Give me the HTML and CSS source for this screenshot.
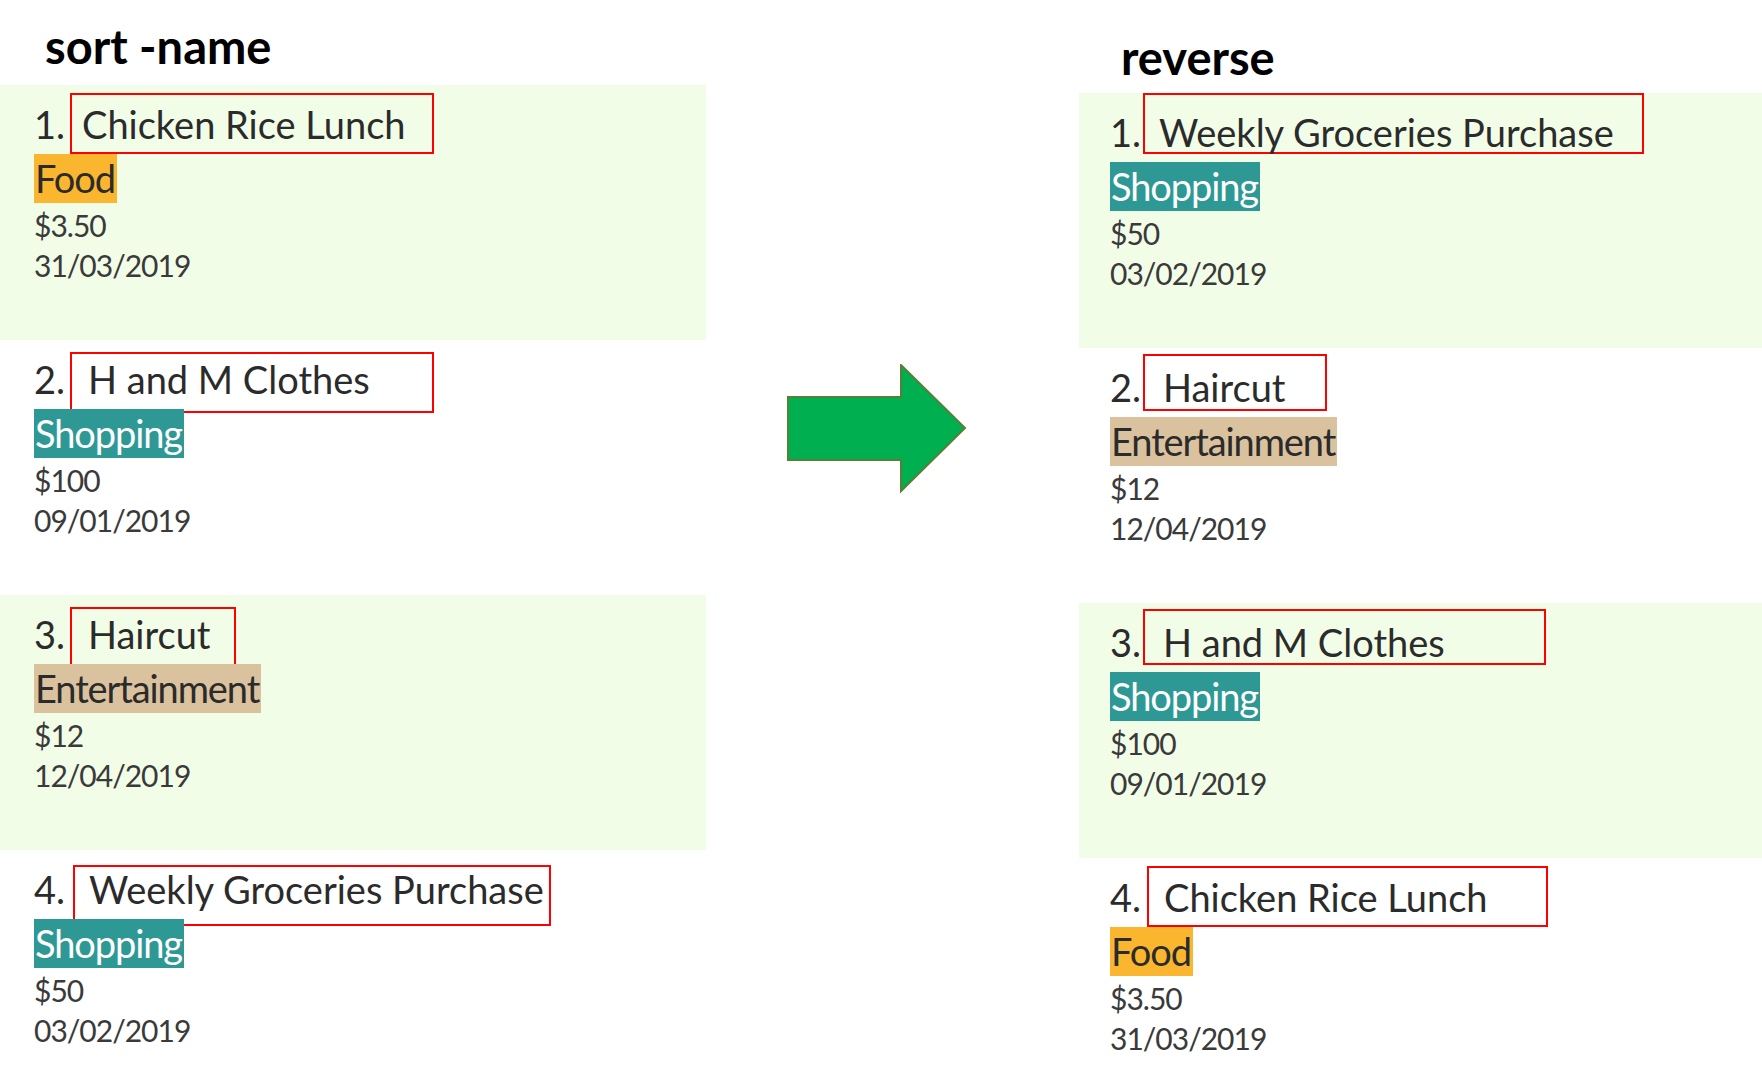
FILE: index.html
```html
<!DOCTYPE html>
<html>
<head>
<meta charset="utf-8">
<link rel="stylesheet" href="styles.css">
</head>
<body>
<section class="panel panel-left">
  <h1 class="heading heading-left">sort -name</h1>
  <div class="card alt">
    <div class="row"><span class="num">1.</span><span class="box box-l1">Chicken Rice Lunch</span></div>
    <div class="tag tag-food">Food</div>
    <div class="amount">$3.50</div>
    <div class="date">31/03/2019</div>
  </div>
  <div class="card">
    <div class="row"><span class="num">2.</span><span class="box box-l2">H and M Clothes</span></div>
    <div class="tag tag-shop">Shopping</div>
    <div class="amount">$100</div>
    <div class="date">09/01/2019</div>
  </div>
  <div class="card alt">
    <div class="row"><span class="num">3.</span><span class="box box-l3">Haircut</span></div>
    <div class="tag tag-ent">Entertainment</div>
    <div class="amount">$12</div>
    <div class="date">12/04/2019</div>
  </div>
  <div class="card">
    <div class="row"><span class="num">4.</span><span class="box box-l4">Weekly Groceries Purchase</span></div>
    <div class="tag tag-shop">Shopping</div>
    <div class="amount">$50</div>
    <div class="date">03/02/2019</div>
  </div>
</section>
<div class="mid">
  <svg class="arrow" width="180" height="130" viewBox="0 0 180 130">
    <polygon points="1,33 114,33 114,1 178,64 114,127 114,96 1,96" fill="#00b050" stroke="#538135" stroke-width="2"/>
  </svg>
</div>
<section class="panel panel-right">
  <h1 class="heading heading-right">reverse</h1>
  <div class="card alt">
    <div class="row"><span class="num">1.</span><span class="box box-r1">Weekly Groceries Purchase</span></div>
    <div class="tag tag-shop">Shopping</div>
    <div class="amount">$50</div>
    <div class="date">03/02/2019</div>
  </div>
  <div class="card">
    <div class="row"><span class="num">2.</span><span class="box box-r2">Haircut</span></div>
    <div class="tag tag-ent">Entertainment</div>
    <div class="amount">$12</div>
    <div class="date">12/04/2019</div>
  </div>
  <div class="card alt">
    <div class="row"><span class="num">3.</span><span class="box box-r3">H and M Clothes</span></div>
    <div class="tag tag-shop">Shopping</div>
    <div class="amount">$100</div>
    <div class="date">09/01/2019</div>
  </div>
  <div class="card">
    <div class="row"><span class="num">4.</span><span class="box box-r4">Chicken Rice Lunch</span></div>
    <div class="tag tag-food">Food</div>
    <div class="amount">$3.50</div>
    <div class="date">31/03/2019</div>
  </div>
</section>
</body>
</html>
```
FILE: styles.css
```css
html, body {
  margin: 0;
  padding: 0;
}
body {
  width: 1762px;
  height: 1067px;
  overflow: hidden;
  display: flex;
  background: #ffffff;
  font-family: Lato, "Liberation Sans", sans-serif;
  color: #2b2b2b;
}
.panel-left { width: 706px; flex: none; }
.mid { width: 373px; flex: none; padding: 364px 0 0 81px; box-sizing: border-box; }
.panel-right { width: 683px; flex: none; }
.arrow { display: block; }

.heading {
  margin: 0;
  font-weight: 700;
  font-size: 47px;
  line-height: 54px;
  color: #000000;
  box-sizing: border-box;
}
.heading-left { height: 85px; padding: 19px 0 0 45px; }
.heading-right { height: 93px; padding: 30px 0 0 42px; }

.card {
  height: 255px;
  box-sizing: border-box;
  padding-left: 34px;
}
.panel-right .card { padding-left: 31px; }
.card.alt { background: #f2fde8; }

.row {
  display: flex;
  align-items: center;
  height: 69px;
  padding-top: 8px;
  box-sizing: border-box;
  font-size: 38px;
}
.num { width: 36px; flex: none; }
.panel-right .num { width: 33px; }
.box {
  display: flex;
  align-items: center;
  height: 61px;
  box-sizing: border-box;
  border: 2px solid #ff0000;
  padding-left: 14px;
  white-space: nowrap;
}
.box-l1 { width: 364px; padding-left: 10px; }
.box-l2 { width: 364px; padding-left: 16px; margin-top: 7px; padding-bottom: 7px; }
.box-l3 { width: 166px; padding-left: 16px; margin-top: 7px; padding-bottom: 7px; }
.box-l4 { width: 478px; padding-left: 14px; margin-left: 3px; margin-top: 13px; padding-bottom: 13px; }
.box-r1 { width: 501px; margin-bottom: 16px; padding-top: 16px; }
.box-r2 { width: 184px; height: 57px; padding-left: 18px; margin-bottom: 8px; padding-top: 8px; }
.box-r3 { width: 403px; height: 56px; padding-left: 18px; margin-bottom: 9px; padding-top: 9px; }
.box-r4 { width: 401px; padding-left: 15px; margin-left: 4px; }

.tag {
  display: inline-block;
  height: 49px;
  line-height: 49px;
  font-size: 38px;
  letter-spacing: -1.1px;
  padding: 0 2px 0 1px;
}
.tag-food { background: #fbb630; color: #2b2b2b; }
.tag-shop { background: #2e9994; color: #ffffff; }
.tag-ent { background: #dac29f; color: #2b2b2b; }

.amount, .date {
  font-size: 30px;
  line-height: 40px;
  letter-spacing: -1px;
  color: #3a3a3a;
}
.amount { margin-top: 2px; }
```
